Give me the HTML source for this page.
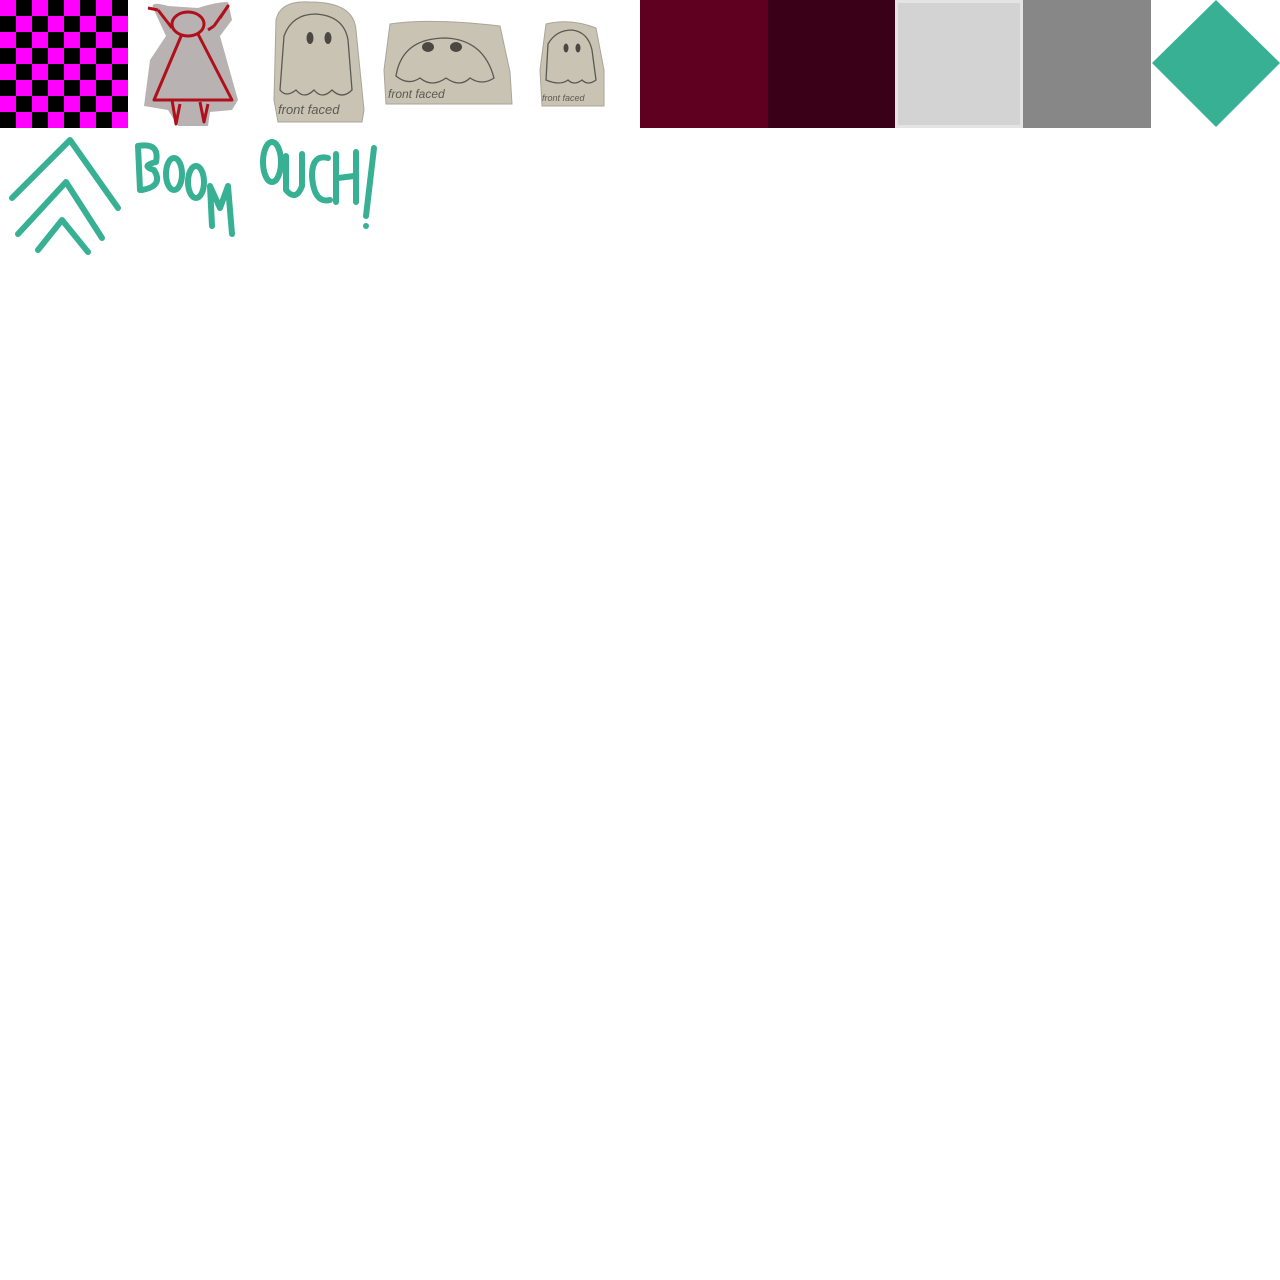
<!DOCTYPE html>
<html><head><meta charset="utf-8"><style>
html,body{margin:0;padding:0;background:#fff;width:1280px;height:1280px;overflow:hidden;position:relative}
.a{position:absolute}
</style></head><body>
<svg class="a" style="left:0;top:0" width="128" height="128"><defs><pattern id="p" width="32" height="32" patternUnits="userSpaceOnUse"><rect width="32" height="32" fill="#000"/><rect width="16" height="16" fill="#ff00ff"/><rect x="16" y="16" width="16" height="16" fill="#ff00ff"/></pattern></defs><rect width="128" height="128" fill="url(#p)"/></svg>
<svg class="a" style="left:128px;top:0" width="128" height="128">
<path d="M26 10 Q20 0 40 6 L70 8 Q88 2 100 2 L104 20 L92 36 L110 100 L104 110 L82 112 L80 126 L50 126 L40 110 L16 106 L22 60 L38 36 Z" fill="#b9b2b2"/>
<g fill="none" stroke="#b0101c" stroke-width="3" stroke-linejoin="round">
<ellipse cx="60" cy="24" rx="16" ry="12"/>
<path d="M30 10 L44 28 M86 26 L100 6 L92 18 M54 34 L26 100 L104 100 L70 34 M44 100 L48 124 L52 104 M72 102 L76 122 L80 104 M20 8 L30 10 M86 26 L80 30"/>
</g></svg>
<svg class="a" style="left:270px;top:0" width="370" height="128">
<g fill="#c9c3b4" stroke="#aaa59a" stroke-width="1">
<path d="M6 20 Q10 0 40 2 Q84 2 86 30 L94 110 L92 122 L8 122 L4 100 Z"/>
<path d="M120 24 Q160 18 230 26 L240 72 L242 104 L116 104 L114 70 Z"/>
<path d="M276 24 Q300 18 326 28 L334 70 L334 106 L272 106 L270 70 Z"/>
</g>
<g fill="none" stroke="#5b5a50" stroke-width="1.3">
<path d="M10 90 L14 36 Q22 14 46 14 Q74 16 78 40 L82 90 Q72 100 62 90 Q52 100 44 90 Q34 100 26 90 Q16 98 10 90Z"/>
<path d="M126 76 Q132 38 176 38 Q214 40 224 78 Q212 86 200 78 Q190 88 176 78 Q162 88 150 78 Q138 86 126 76Z"/>
<path d="M276 80 L278 44 Q286 30 302 30 Q318 32 322 50 L326 80 Q318 86 312 80 Q304 86 298 80 Q290 86 276 80Z"/>
</g>
<g fill="#4a4840"><ellipse cx="40" cy="38" rx="3.5" ry="6"/><ellipse cx="58" cy="38" rx="3.5" ry="6"/><ellipse cx="158" cy="47" rx="6" ry="5"/><ellipse cx="186" cy="47" rx="6" ry="5"/><ellipse cx="296" cy="48" rx="2.5" ry="4.5"/><ellipse cx="308" cy="48" rx="2.5" ry="4.5"/></g>
<g font-family="Liberation Sans,sans-serif" fill="#5b5a50" font-style="italic"><text x="8" y="114" font-size="13">front faced</text><text x="118" y="98" font-size="12">front faced</text><text x="272" y="101" font-size="9">front faced</text></g>
</svg>
<div class="a" style="left:640px;top:0;width:128px;height:128px;background:#600020"></div>
<div class="a" style="left:768px;top:0;width:127px;height:128px;background:#3a0018"></div>
<div class="a" style="left:895px;top:0;width:128px;height:128px;background:#d3d3d3;box-sizing:border-box;border:3px solid #e4e4e4"></div>
<div class="a" style="left:1023px;top:0;width:128px;height:128px;background:#878787"></div>
<svg class="a" style="left:1151px;top:0" width="129" height="128"><path d="M65 0 L129 63 L65 127 L1 63Z" fill="#38b094"/></svg>
<svg class="a" style="left:0;top:130px" width="400" height="130">
<g fill="none" stroke="#38b094" stroke-width="6" stroke-linecap="round" stroke-linejoin="round">
<path d="M12 68 L70 10 L118 78"/><path d="M18 104 L66 52 L102 108"/><path d="M38 120 L62 90 L88 122"/>
<path d="M140 60 L138 16 Q160 12 156 32 Q140 36 154 40 Q164 56 142 60"/>
<ellipse cx="174" cy="44" rx="8" ry="16"/><ellipse cx="196" cy="52" rx="8" ry="16"/>
<path d="M212 96 L210 56 L220 78 L228 56 L232 104"/>
<ellipse cx="272" cy="32" rx="9" ry="20"/><path d="M286 26 L286 60 Q296 72 302 56 L302 24"/>
<path d="M328 28 Q312 24 312 46 Q314 74 330 70"/><path d="M336 24 L336 72 M338 48 L354 46 M356 22 L356 72"/>
<path d="M374 18 L366 86"/>
</g><circle cx="366" cy="96" r="3" fill="#38b094"/></svg>
</body></html>
